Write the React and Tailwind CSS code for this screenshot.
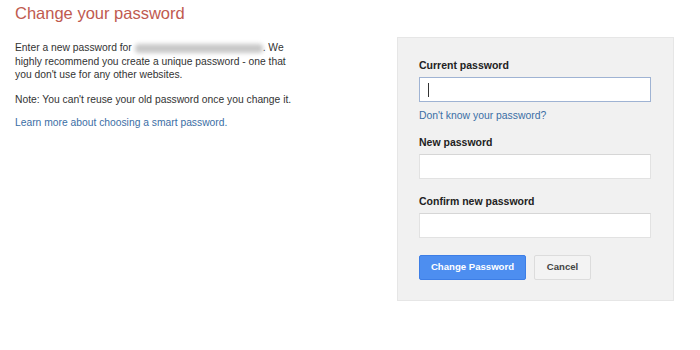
import React from 'react';

const font = { fontFamily: 'Arial, "Liberation Sans", sans-serif' };

function Field({ label, focused, cursor }) {
  return (
    <div className="flex flex-col">
      <label className="text-[10.5px] font-bold text-[#222] leading-[12px] mb-[6px]">{label}</label>
      <div
        className={`relative h-[25px] w-[232px] bg-white border ${
          focused ? 'border-[#9fb3d3]' : 'border-[#e2e2e2] border-t-[#d6d6d6]'
        }`}
      >
        {cursor && <span className="absolute left-[8px] top-[5px] h-[14px] w-px bg-[#333]" />}
      </div>
    </div>
  );
}

export default function App() {
  return (
    <div className="w-[700px] h-[350px] bg-white overflow-hidden" style={font}>
      <div className="flex pl-[15px] pt-[2px]">
        <div className="w-[382px] flex flex-col">
          <h1 className="text-[16.5px] leading-[22px] text-[#c05a4f]">Change your password</h1>
          <p className="mt-[17px] text-[10.3px] leading-[13.5px] text-[#333] w-[280px]">
            Enter a new password for{' '}
            <span className="inline-block align-middle h-[9px] w-[128px] bg-[#c8c8c8] blur-[2px] rounded-sm" />
            . We highly recommend you create a unique password - one that you don't use for any other websites.
          </p>
          <p className="mt-[11px] text-[10.3px] leading-[13px] text-[#333]">
            Note: You can't reuse your old password once you change it.
          </p>
          <a className="mt-[10px] text-[10.3px] leading-[13px] text-[#3b6ea5]">
            Learn more about choosing a smart password.
          </a>
        </div>
        <div className="mt-[35px] w-[277px] h-[264px] bg-[#f1f1f1] border border-[#e6e6e6] pl-[21px] pt-[21px]">
          <Field label="Current password" focused cursor />
          <a className="mt-[7px] block text-[10.4px] leading-[13px] text-[#3b6ea5]">Don't know your password?</a>
          <div className="mt-[14px]">
            <Field label="New password" />
          </div>
          <div className="mt-[16px]">
            <Field label="Confirm new password" />
          </div>
          <div className="mt-[17px] flex gap-[8px]">
            <button className="h-[25px] w-[107px] bg-[#4d8ef0] border border-[#3d7ee6] rounded-[2px] text-white text-[9.6px] font-bold">
              Change Password
            </button>
            <button className="h-[25px] w-[57px] bg-[#f3f3f3] border border-[#dcdcdc] rounded-[2px] text-[#444] text-[9.6px] font-bold">
              Cancel
            </button>
          </div>
        </div>
      </div>
    </div>
  );
}
